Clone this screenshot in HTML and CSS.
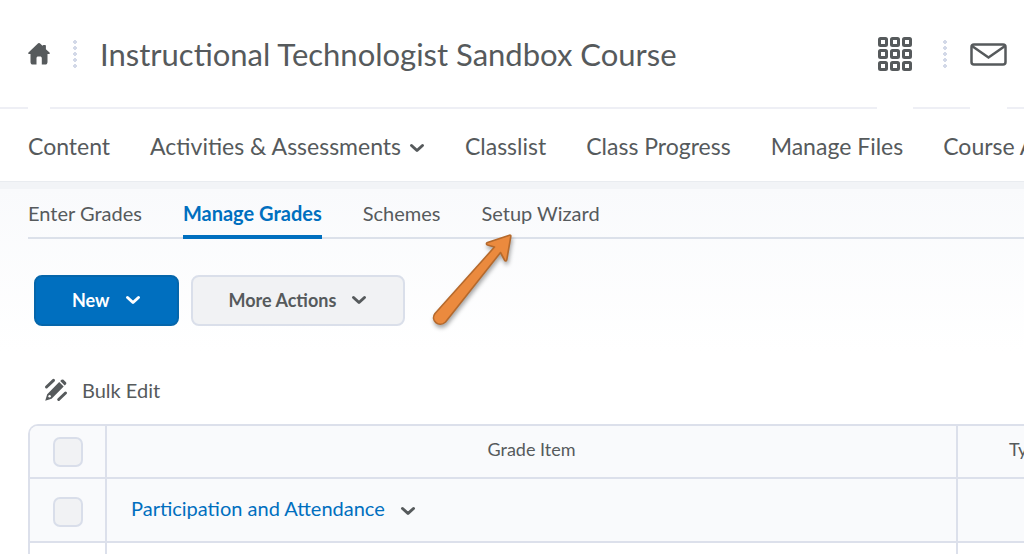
FILE: index.html
```
<!DOCTYPE html>
<html lang="en">

<head>
  <meta charset="utf-8">
  <title>Manage Grades - Instructional Technologist Sandbox Course</title>
  <meta name="viewport" content="width=device-width, initial-scale=1">
  <link rel="stylesheet" href="styles.css">
</head>

<body>

  <header class="header">
    <a href="#" class="icon-link" aria-label="My Home">
      <svg width="22" height="22" viewBox="0 0 22 22">
        <path fill="#565a5c" d="M9.900.500a1.600 1.600 0 0 1 2.200 0l2.400 2.300c.2-.5.6-.7 1-.7h1.400c.6 0 1 .4 1 1v3.100l3.600 3.300c.8.8.3 1.600-.6 1.600h-1.400V19c0 1.700-.9 2.600-2.500 2.600h-3.200v-6.400c0-1-.7-1.700-1.700-1.700h-1.900c-1 0-1.700.7-1.700 1.700v6.400H5c-1.600 0-2.500-.9-2.500-2.600v-7.900H1.100c-.9 0-1.400-.8-.6-1.600z"/>
      </svg>
    </a>
    <span class="dots"></span>
    <a href="#" class="course-name">Instructional Technologist Sandbox Course</a>
    <a href="#" class="icon-link" aria-label="Select a course">
      <svg width="36" height="36" viewBox="0 0 36 36" fill="none" stroke="#565a5c" stroke-width="3">
        <rect x="2.500" y="2.500" width="7" height="7" rx="1"/>
        <rect x="14.500" y="2.500" width="7" height="7" rx="1"/>
        <rect x="26.500" y="2.500" width="7" height="7" rx="1"/>
        <rect x="2.500" y="14.500" width="7" height="7" rx="1"/>
        <rect x="14.500" y="14.500" width="7" height="7" rx="1"/>
        <rect x="26.500" y="14.500" width="7" height="7" rx="1"/>
        <rect x="2.500" y="26.500" width="7" height="7" rx="1"/>
        <rect x="14.500" y="26.500" width="7" height="7" rx="1"/>
        <rect x="26.500" y="26.500" width="7" height="7" rx="1"/>
      </svg>
    </a>
    <span class="dots wide"></span>
    <a href="#" class="icon-link" aria-label="Message alerts">
      <svg width="37" height="24" viewBox="0 0 37 24" fill="none" stroke="#565a5c" stroke-width="2.500">
        <rect x="1.500" y="2.500" width="34" height="20" rx="2.500"/>
        <path d="M2 4l16.500 11.500L35 4"/>
      </svg>
    </a>
  </header>

  <nav class="course-nav">
    <a href="#">Content</a>
    <a href="#">Activities &amp; Assessments
      <svg class="chevron" width="16" height="10" viewBox="0 0 16 10"><path d="M2.500 2.500l5.500 5 5.500-5"/></svg>
    </a>
    <a href="#">Classlist</a>
    <a href="#">Class Progress</a>
    <a href="#">Manage Files</a>
    <a href="#">Course Admin</a>
  </nav>

  <main class="page">
    <nav class="tabs">
      <a href="#">Enter Grades</a>
      <a href="#" class="active">Manage Grades</a>
      <a href="#">Schemes</a>
      <a href="#">Setup Wizard</a>
    </nav>

    <!-- arrow pointing at the Setup Wizard tab -->
    <svg class="arrow" width="100" height="110" viewBox="0 0 100 110">
      <path fill="#eb8a3e" stroke="#b5692c" stroke-width="1.600" stroke-linejoin="round" d="M84.500 9.200L62.500 16.500c-1.500.6-1.500 2 0 2.500l7 2L10 87.500c-5 7 4 14.500 10.500 8.500L75.500 26.500l4 7.500c.8 1.500 2 1.300 2.300-.3L85.800 10.500c.2-1-.4-1.600-1.300-1.300z"/>
    </svg>

    <div class="actions">
      <button type="button" class="btn primary">New
        <svg class="chevron" width="16" height="10" viewBox="0 0 16 10"><path d="M2.500 2.500l5.500 5 5.500-5"/></svg>
      </button>
      <button type="button" class="btn">More Actions
        <svg class="chevron" width="16" height="10" viewBox="0 0 16 10"><path d="M2.500 2.500l5.500 5 5.500-5"/></svg>
      </button>
    </div>

    <a href="#" class="bulk-edit">
      <svg width="24" height="24" viewBox="0 0 24 24" fill="#565a5c">
        <path d="M17.500 1.800q1-.8 2 0l2.500 2.500q.8 1 0 2l-1.300 1.300L16.200 3.100zM15.200 4.100l4.500 4.500L7.600 20.700 1.200 22.700l2-6.400z"/>
        <circle cx="5.600" cy="18.300" r="1.200" fill="#fff"/>
        <path d="M9.500 2.300L2.500 9M21.500 15l-6.800 6.500" fill="none" stroke="#565a5c" stroke-width="3" stroke-linecap="round"/>
      </svg>
      Bulk Edit
    </a>

    <table class="grades">
      <thead>
        <tr>
          <th class="check"><input type="checkbox" aria-label="Select all rows"></th>
          <th>Grade Item</th>
          <th class="type">Type</th>
        </tr>
      </thead>
      <tbody>
        <tr class="category">
          <td class="check"><input type="checkbox" aria-label="Select Participation and Attendance"></td>
          <td>
            <a href="#">Participation and Attendance</a>
            <svg class="chevron" width="16" height="10" viewBox="0 0 16 10"><path d="M2.500 2.500l5.500 5 5.500-5"/></svg>
          </td>
          <td></td>
        </tr>
        <tr>
          <td></td>
          <td></td>
          <td></td>
        </tr>
      </tbody>
    </table>
  </main>

</body>

</html>
```
FILE: styles.css
```
* {
  box-sizing: border-box;
}

html {
  overflow: hidden;
}

body {
  margin: 0;
  background: #fff;
  color: #565a5c;
  font-family: Lato, Carlito, "Liberation Sans", sans-serif;
  font-size: 20px;
}

a {
  color: inherit;
  text-decoration: none;
}

/* Course header */
.header {
  display: flex;
  align-items: center;
  height: 109px;
  padding: 0 17px 0 28px;
  border-bottom: 2px solid #eeeff5;
}

/* the icon links run over the header line */
.icon-link {
  display: flex;
  align-items: center;
  align-self: stretch;
  margin-bottom: -2px;
  padding-bottom: 1px;
  background: #fff;
}

.dots {
  width: 4px;
  height: 30px;
  margin: 0 23px;
  background: radial-gradient(circle, #d3d9e8 2px, transparent 2px) 0 0 / 4px 6px;
}

.dots.wide {
  margin-left: 30px;
}

.course-name {
  flex: 1;
  font-size: 31px;
  line-height: 40px;
  white-space: nowrap;
}

/* Course navbar */
.course-nav {
  display: flex;
  gap: 40px;
  height: 72px;
  padding: 0 28px;
  line-height: 74px;
  font-size: 23px;
  white-space: nowrap;
}

.chevron {
  fill: none;
  stroke: currentColor;
  stroke-width: 3;
  stroke-linecap: round;
  stroke-linejoin: round;
}

.course-nav .chevron {
  margin: 0 0 2px 2px;
}

/* Page content */
.page {
  position: relative;
  padding: 7px 0 0 28px;
  border-top: 1px solid #e9ecf0;
  background: linear-gradient(#f2f4f7 7px, #f9fafc 7px, #fff 170px);
}

.tabs {
  display: flex;
  gap: 41px;
  border-bottom: 2px solid #dce1ea;
}

.tabs a {
  height: 50px;
  margin-bottom: -2px;
  line-height: 48px;
}

.tabs .active {
  border-bottom: 4px solid #006fbf;
  color: #006fbf;
  font-weight: bold;
}

.arrow {
  position: absolute;
  left: 425px;
  top: 44px;
  filter: drop-shadow(1px 3px 2px rgba(0, 0, 0, 0.35));
}

.actions {
  display: flex;
  gap: 12px;
  padding: 36px 6px 0;
}

.btn {
  display: flex;
  align-items: center;
  gap: 15px;
  height: 51px;
  padding: 0 36px 2px;
  border: 2px solid #dadfea;
  border-radius: 8px;
  background: #f1f2f4;
  color: #565a5c;
  font-family: inherit;
  font-size: 18px;
  font-weight: bold;
  cursor: pointer;
}

.btn.primary {
  border-color: #0566ab;
  background: #006fbf;
  color: #fff;
}

.bulk-edit {
  display: flex;
  align-items: center;
  gap: 14px;
  width: max-content;
  margin: 49px 0 19px 16px;
  line-height: 30px;
}

/* Grades table, the last column runs past the window edge */
.grades {
  width: calc(100% + 76px);
  table-layout: fixed;
  border-collapse: separate;
  border-spacing: 0;
  border-top: 2px solid #dce0eb;
  border-left: 2px solid #dce0eb;
  border-top-left-radius: 10px;
}

.grades th,
.grades td {
  height: 64px;
  padding: 0 24px 5px;
  border-right: 2px solid #dce0eb;
  border-bottom: 2px solid #dce0eb;
}

.grades th {
  height: 53px;
  background: #f9fafc;
  font-size: 18px;
  font-weight: normal;
}

.grades th:first-child {
  border-top-left-radius: 8px;
}

.grades .check {
  width: 77px;
  padding: 4px 0 0;
  text-align: center;
}

.grades th.check {
  padding: 0;
}

.grades .type {
  width: 142px;
}

.category td {
  background: #f9fafc;
}

.category a {
  color: #006fbf;
}

.category .chevron {
  margin-left: 10px;
}

.grades input {
  appearance: none;
  display: block;
  width: 30px;
  height: 30px;
  margin: 0 auto;
  border: 2px solid #d9deea;
  border-radius: 7px;
  background: #f1f2f4;
}
```
